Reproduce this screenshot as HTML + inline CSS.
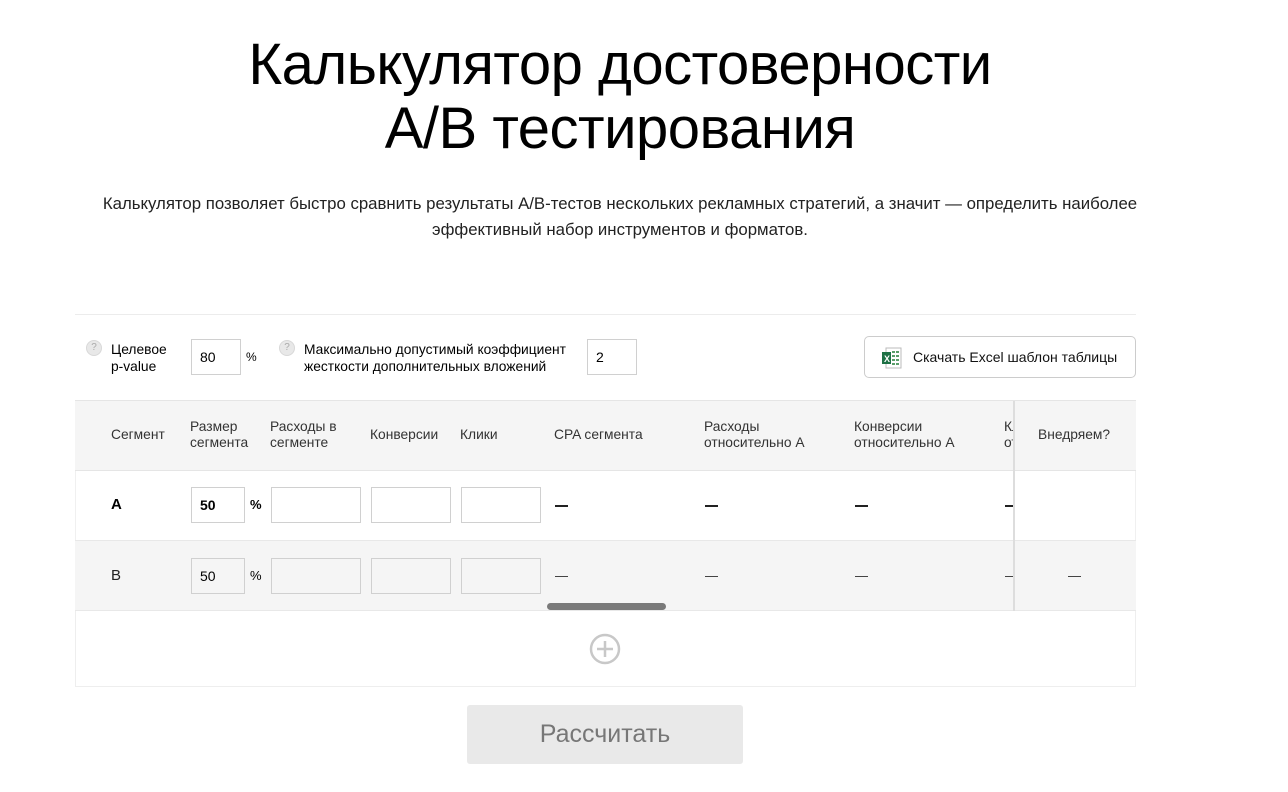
<!DOCTYPE html>
<html><head><meta charset="utf-8"><style>
*{box-sizing:border-box}
body{margin:0;width:1288px;height:792px;background:#fff;font-family:"Liberation Sans",sans-serif;color:#000;position:relative;overflow:hidden}
.a{position:absolute}
h1{position:absolute;left:0;width:1240px;top:33px;margin:0;text-align:center;font-weight:400;font-size:58px;line-height:64px;color:#000;letter-spacing:-0.5px}
.sub{left:0;width:1240px;top:191px;text-align:center;font-size:16.8px;line-height:26px;color:#222}
.s13{font-size:13.8px;line-height:17px;color:#000}
.q{width:16px;height:16px;border-radius:50%;background:#e8e8e8;border:1px solid #d8d8d8;color:#aaa;font-size:10px;text-align:center;line-height:14px}
.in{border:1px solid #d0d0d0;background:#fff;font-size:14px;padding-left:8px;line-height:34px;height:36px}
.g{background:#f5f5f5}
.hd{font-size:13.8px;line-height:16px;color:#333}
</style></head><body>
<h1>Калькулятор достоверности<br>A/B тестирования</h1>
<div class="a sub">Калькулятор позволяет быстро сравнить результаты A/B-тестов нескольких рекламных стратегий, а значит — определить наиболее<br>эффективный набор инструментов и форматов.</div>
<div class="a" style="left:75px;top:314px;width:1061px;height:1px;background:#ececec"></div>

<div class="a q" style="left:86px;top:340px">?</div>
<div class="a s13" style="left:111px;top:341px">Целевое<br>p-value</div>
<div class="a in" style="left:191px;top:339px;width:50px;height:36px">80</div>
<div class="a s13" style="left:246px;top:349px;font-size:12px">%</div>
<div class="a q" style="left:279px;top:340px">?</div>
<div class="a s13" style="left:304px;top:341px">Максимально допустимый коэффициент<br>жесткости дополнительных вложений</div>
<div class="a in" style="left:587px;top:339px;width:50px;height:36px">2</div>

<div class="a" style="left:864px;top:336px;width:272px;height:42px;border:1px solid #ccc;border-radius:5px"></div>
<svg class="a" style="left:882px;top:347px" width="20" height="22" viewBox="0 0 20 22"><rect x="4" y="1" width="15" height="20" fill="#fff" stroke="#bbb"/><g fill="#5a9e6a"><rect x="10" y="4" width="3" height="2"/><rect x="14" y="4" width="3" height="2"/><rect x="10" y="8" width="3" height="2"/><rect x="14" y="8" width="3" height="2"/><rect x="10" y="12" width="3" height="2"/><rect x="14" y="12" width="3" height="2"/><rect x="10" y="16" width="3" height="2"/><rect x="14" y="16" width="3" height="2"/></g><rect x="0" y="5" width="9" height="12" fill="#1e7145"/><text x="2" y="15" font-size="9" fill="#fff" font-family="Liberation Sans" font-weight="bold">X</text></svg>
<div class="a" style="left:913px;top:348px;font-size:14px;line-height:18px;color:#111">Скачать Excel шаблон таблицы</div>

<div class="a g" style="left:75px;top:400px;width:1061px;height:71px;border-top:1px solid #e5e5e5;border-bottom:1px solid #e5e5e5"></div>
<div class="a" style="left:75px;top:471px;width:1061px;height:70px;background:#fff;border-left:1px solid #f0f0f0;border-right:1px solid #f0f0f0"></div>
<div class="a g" style="left:75px;top:540px;width:1061px;height:71px;border-top:1px solid #e8e8e8;border-bottom:1px solid #e8e8e8"></div>
<div class="a" style="left:75px;top:611px;width:1061px;height:76px;border:1px solid #eee;border-top:none"></div>

<div class="a hd" style="left:111px;top:427px">Сегмент</div>
<div class="a hd" style="left:190px;top:419px">Размер<br>сегмента</div>
<div class="a hd" style="left:270px;top:419px">Расходы в<br>сегменте</div>
<div class="a hd" style="left:370px;top:427px">Конверсии</div>
<div class="a hd" style="left:460px;top:427px">Клики</div>
<div class="a hd" style="left:554px;top:427px">CPA сегмента</div>
<div class="a hd" style="left:704px;top:419px">Расходы<br>относительно A</div>
<div class="a hd" style="left:854px;top:419px">Конверсии<br>относительно A</div>
<div class="a hd" style="left:1004px;top:419px;width:10px;overflow:hidden">Кл<br>от</div>
<div class="a hd" style="left:1038px;top:427px">Внедряем?</div>

<div class="a" style="left:111px;top:496px;font-size:15px;font-weight:bold">A</div>
<div class="a in" style="left:191px;top:487px;width:54px;font-weight:bold">50</div>
<div class="a" style="left:250px;top:497px;font-size:13px;font-weight:bold">%</div>
<div class="a in" style="left:271px;top:487px;width:90px"></div>
<div class="a in" style="left:371px;top:487px;width:80px"></div>
<div class="a in" style="left:461px;top:487px;width:80px"></div>
<div class="a" style="left:555px;top:505px;width:13px;height:2px;background:#222"></div>
<div class="a" style="left:705px;top:505px;width:13px;height:2px;background:#222"></div>
<div class="a" style="left:855px;top:505px;width:13px;height:2px;background:#222"></div>
<div class="a" style="left:1005px;top:505px;width:9px;height:2px;background:#222"></div>

<div class="a" style="left:111px;top:567px;font-size:15px;color:#222">B</div>
<div class="a in" style="left:191px;top:558px;width:54px;background:#f5f5f5">50</div>
<div class="a" style="left:250px;top:568px;font-size:13px">%</div>
<div class="a in" style="left:271px;top:558px;width:90px;background:#f5f5f5"></div>
<div class="a in" style="left:371px;top:558px;width:80px;background:#f5f5f5"></div>
<div class="a in" style="left:461px;top:558px;width:80px;background:#f5f5f5"></div>
<div class="a" style="left:555px;top:576px;width:13px;height:1px;background:#444"></div>
<div class="a" style="left:705px;top:576px;width:13px;height:1px;background:#444"></div>
<div class="a" style="left:855px;top:576px;width:13px;height:1px;background:#444"></div>
<div class="a" style="left:1005px;top:576px;width:9px;height:1px;background:#444"></div>
<div class="a" style="left:1068px;top:576px;width:13px;height:1px;background:#444"></div>

<div class="a" style="left:1013px;top:401px;width:2px;height:210px;background:#ddd"></div>
<div class="a" style="left:547px;top:603px;width:119px;height:7px;border-radius:4px;background:#7a7a7a"></div>

<svg class="a" style="left:589px;top:633px" width="32" height="32" viewBox="0 0 32 32"><circle cx="16" cy="16" r="14" fill="none" stroke="#c8c8c8" stroke-width="2.5"/><path d="M16 8v16M8 16h16" stroke="#c8c8c8" stroke-width="2.5"/></svg>

<div class="a" style="left:467px;top:705px;width:276px;height:59px;background:#e9e9e9;border-radius:3px;text-align:center;line-height:59px;font-size:25px;color:#777">Рассчитать</div>
</body></html>
